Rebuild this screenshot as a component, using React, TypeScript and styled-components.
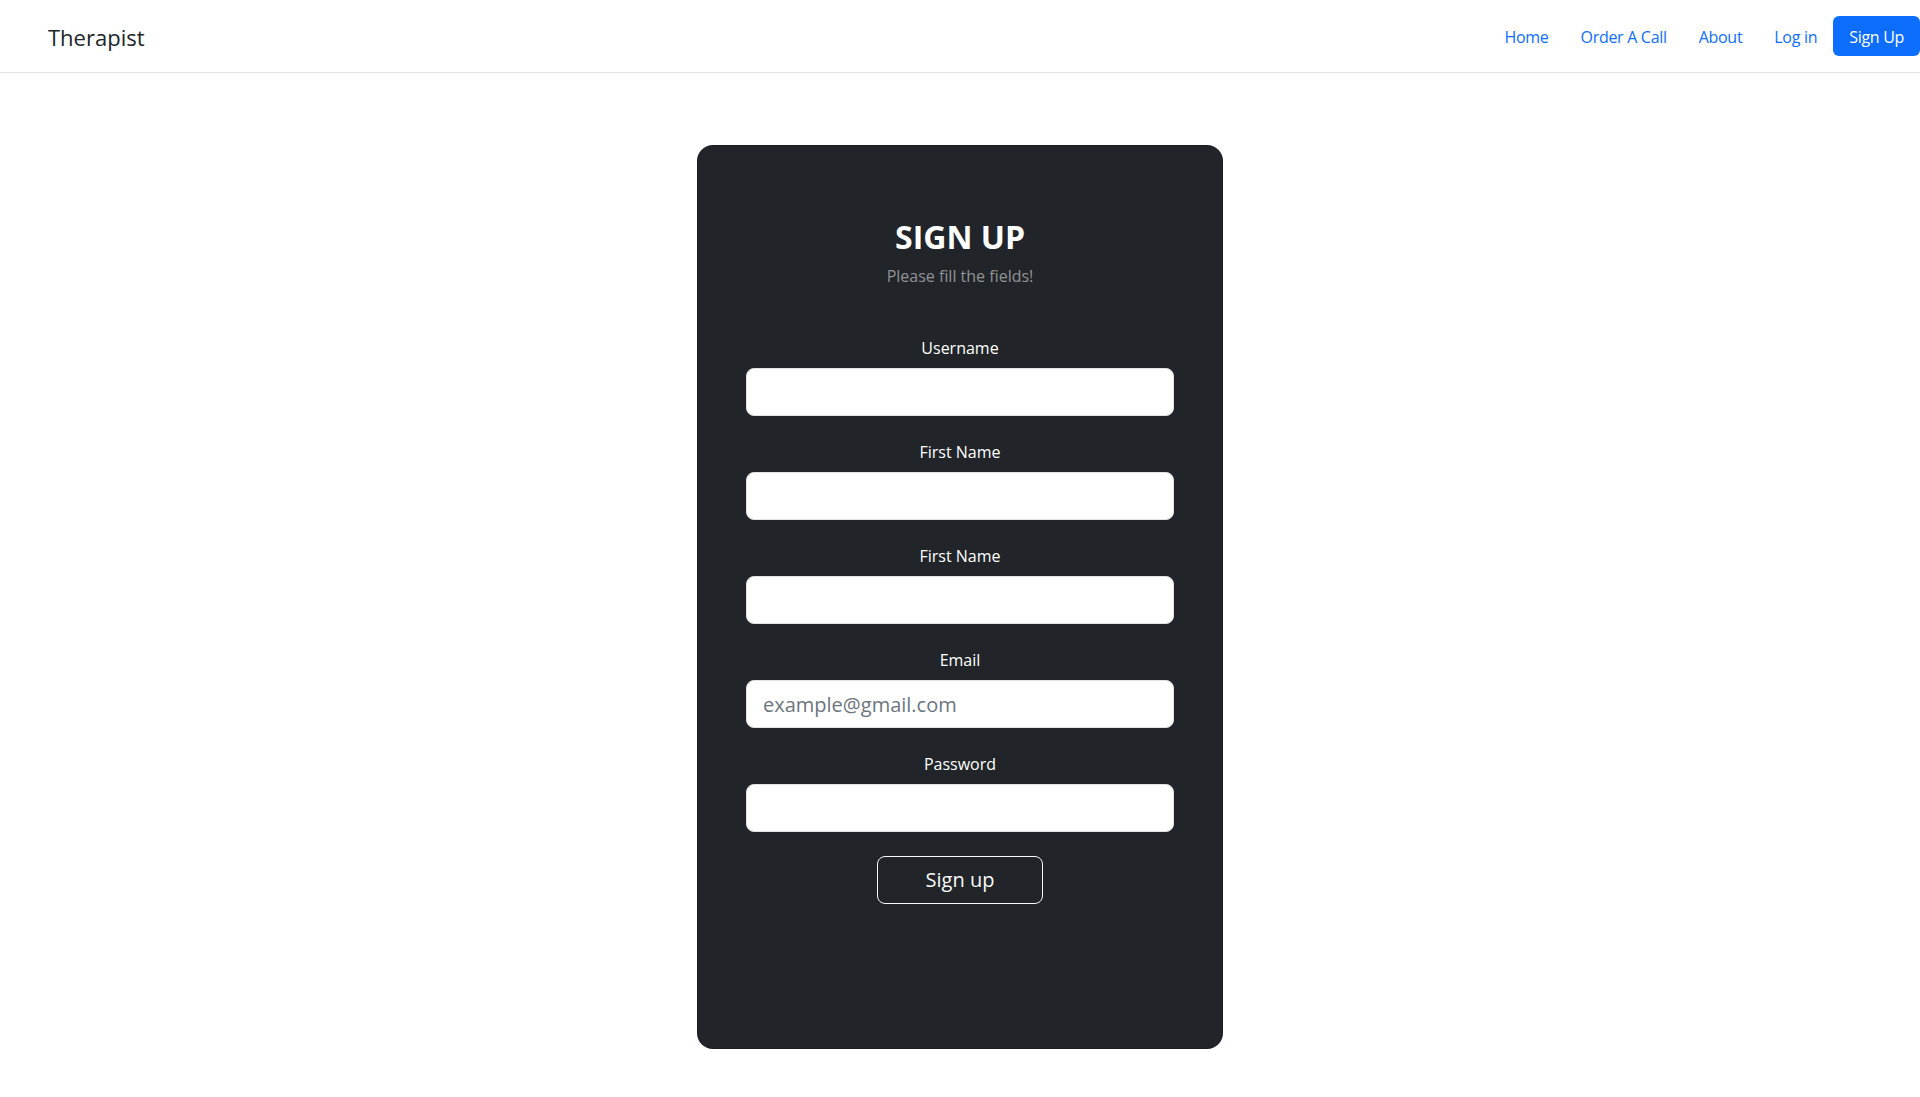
import React from "react";
import styled, { createGlobalStyle } from "styled-components";

const GlobalStyle = createGlobalStyle`
    body {
        margin: 0;
        background: #ffffff;
        font-family: "Open Sans", "Noto Sans", sans-serif;
        font-size: 16px;
        line-height: 1.5;
        color: #212529;
    }
    * {
        box-sizing: border-box;
    }
`;

const fields: Array<{ label: string; type: string; placeholder?: string }> = [
    { label: "Username", type: "text" },
    { label: "First Name", type: "text" },
    { label: "First Name", type: "text" },
    { label: "Email", type: "email", placeholder: "example@gmail.com" },
    { label: "Password", type: "password" },
];

const App: React.FC = () => {
    return (
        <>
            <GlobalStyle />
            <NavBar>
                <Brand href="#">Therapist</Brand>
                <NavList>
                    <NavLink href="#">Home</NavLink>
                    <NavLink href="#">Order A Call</NavLink>
                    <NavLink href="#">About</NavLink>
                    <NavLink href="#">Log in</NavLink>
                    <NavLink href="#" $primary>Sign Up</NavLink>
                </NavList>
            </NavBar>

            <Main>
                <Card>
                    <Title>Sign up</Title>
                    <Subtitle>Please fill the fields!</Subtitle>
                    {fields.map((field, idx) => (
                        <Field key={idx}>
                            <Label htmlFor={"field-" + idx}>{field.label}</Label>
                            <Input id={"field-" + idx} type={field.type} placeholder={field.placeholder} />
                        </Field>
                    ))}
                    <SubmitButton type="submit">Sign up</SubmitButton>
                </Card>
            </Main>
        </>
    );
};

const NavBar = styled.header`
    display: flex;
    align-items: center;
    justify-content: space-between;
    height: 73px;
    padding: 16px 0 16px 48px;
    border-bottom: 1px solid #dee2e6;
`;

const Brand = styled.a`
    padding-top: 3px;
    font-size: 22px;
    line-height: 1.5;
    color: #212529;
    text-decoration: none;
`;

const NavList = styled.nav`
    display: flex;
    align-items: center;
`;

const NavLink = styled.a<{ $primary?: boolean }>`
    padding: 9px 16px 7px;
    font-size: 16px;
    line-height: 24px;
    letter-spacing: -0.3px;
    text-decoration: none;
    color: ${(p) => (p.$primary ? "#ffffff" : "#0d6efd")};
    background: ${(p) => (p.$primary ? "#0d6efd" : "transparent")};
    border-radius: 6px;
`;

const Main = styled.main`
    display: flex;
    justify-content: center;
    padding: 72px 0 48px;
`;

const Card = styled.form`
    width: 526px;
    padding: 72px 48px 144px;
    background: #212529;
    color: #ffffff;
    border: 1px solid rgba(0, 0, 0, 0.175);
    border-radius: 16px;
    text-align: center;
`;

const Title = styled.h2`
    margin: 0 0 8px;
    font-size: 32px;
    line-height: 1.2;
    font-weight: 700;
    text-transform: uppercase;
`;

const Subtitle = styled.p`
    margin: 0 0 48px;
    color: rgba(255, 255, 255, 0.5);
`;

const Field = styled.div`
    margin-bottom: 24px;
`;

const Label = styled.label`
    display: block;
    margin-bottom: 8px;
`;

const Input = styled.input`
    display: block;
    width: 100%;
    height: 48px;
    padding: 8px 16px;
    font-family: inherit;
    font-size: 20px;
    line-height: 1.5;
    color: #212529;
    background: #ffffff;
    border: 1px solid #dee2e6;
    border-radius: 8px;
    outline: none;

    &::placeholder {
        color: #6c757d;
    }
`;

const SubmitButton = styled.button`
    padding: 8px 48px;
    font-family: inherit;
    font-size: 20px;
    line-height: 1.5;
    color: #f8f9fa;
    background: transparent;
    border: 1px solid #f8f9fa;
    border-radius: 8px;
    cursor: pointer;
`;

export default App;
